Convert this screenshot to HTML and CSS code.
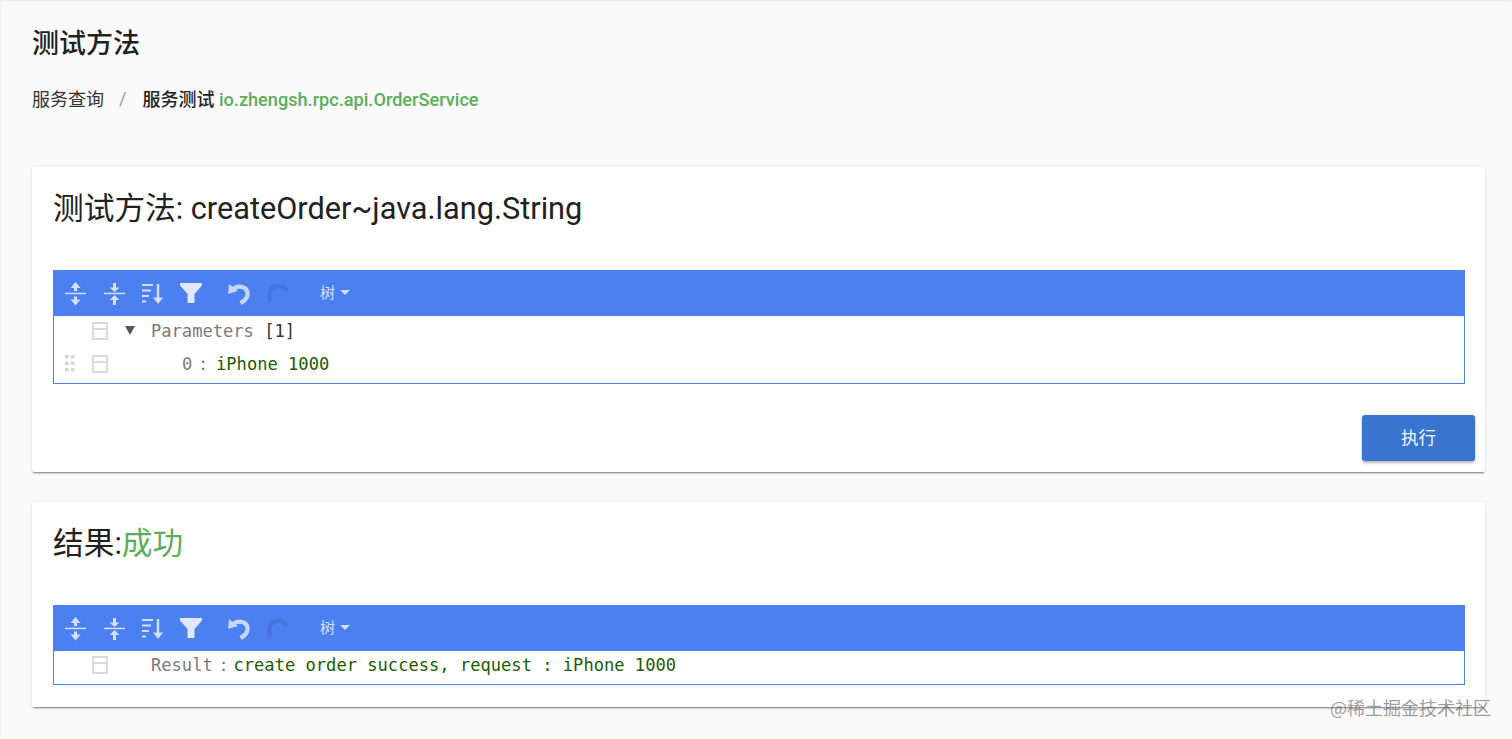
FILE: index.html
```html
<!DOCTYPE html>
<html lang="zh">
<head>
<meta charset="utf-8">
<title>测试方法</title>
<link rel="stylesheet" href="styles.css">
</head>
<body>
<svg class="defs" width="0" height="0" aria-hidden="true">
  <defs>
    <symbol id="i-expand" viewBox="0 0 21 24">
      <path d="M0 10.700h21v1.500H0z" fill="#d3e0fb"/>
      <path d="M10.500 0L15.500 6H12v3H9V6H5.500zM10.500 23.500L15.500 17.500H12v-3H9v3H5.500z" fill="#d3e0fb"/>
    </symbol>
    <symbol id="i-collapse" viewBox="0 0 21 24">
      <path d="M0 10.700h21v1.500H0z" fill="#d3e0fb"/>
      <path d="M9 1h3v4.500h3.500l-5 4.500-5-4.500H9zM10.500 13l5 5H12v5H9v-5H5.500z" fill="#d3e0fb"/>
    </symbol>
    <symbol id="i-sort" viewBox="0 0 22 24">
      <path d="M0 2h11v2H0zM0 7.500h9v2H0zM0 13h7v2H0zM0 18.500h4v2H0z" fill="#d3e0fb"/>
      <path d="M14.800 2h2.400v13.500H21l-5 6.500-5-6.500h3.800z" fill="#d3e0fb"/>
    </symbol>
    <symbol id="i-filter" viewBox="0 0 22 24">
      <path d="M0 1h22v2.500L14.500 12v9h-7v-9L0 3.500z" fill="#dfe8fc"/>
    </symbol>
    <symbol id="i-undo" viewBox="0 0 22 24">
      <path d="M0 12L1 2l9 7z" fill="#c4d6f9"/>
      <path d="M5 7.500C9 3 19.500 3.500 19.500 12c0 4-3 7-7 9" fill="none" stroke="#c4d6f9" stroke-width="4.300"/>
    </symbol>
    <symbol id="i-redo" viewBox="0 0 23 24">
      <path d="M4 19C0 13 3 4 11 4c4 0 7 2 9 5" fill="none" stroke="#4673de" stroke-width="4"/>
    </symbol>
    <symbol id="i-grip" viewBox="0 0 11 18">
      <path d="M1 0h3.500v3.500H1zM7 0h3.500v3.500H7zM1 6.500h3.500V10H1zM7 6.500h3.500V10H7zM1 13h3.500v3.500H1zM7 13h3.500v3.500H7z" fill="#d6d6d6"/>
    </symbol>
  </defs>
</svg>

<main class="page">
  <h1 class="page-title">测试方法</h1>
  <nav class="crumbs">
    <span class="crumb">服务查询</span>
    <span class="crumb-sep">/</span>
    <strong class="crumb-current">服务测试 <span class="service">io.zhengsh.rpc.api.OrderService</span></strong>
  </nav>

  <section class="card card-method">
    <h2 class="card-title">测试方法: createOrder~java.lang.String</h2>
    <div class="editor">
      <div class="toolbar">
        <svg class="tool tool-expand"><use href="#i-expand"/></svg>
        <svg class="tool tool-collapse"><use href="#i-collapse"/></svg>
        <svg class="tool tool-sort"><use href="#i-sort"/></svg>
        <svg class="tool tool-filter"><use href="#i-filter"/></svg>
        <svg class="tool tool-undo"><use href="#i-undo"/></svg>
        <svg class="tool tool-redo"><use href="#i-redo"/></svg>
        <span class="mode">树<i class="caret"></i></span>
      </div>
      <div class="tree">
        <div class="row">
          <span class="grip"></span>
          <span class="menu-box"></span>
          <span class="toggle"></span>
          <span class="key">Parameters</span>
          <span class="count">[1]</span>
        </div>
        <div class="row">
          <svg class="grip"><use href="#i-grip"/></svg>
          <span class="menu-box"></span>
          <span class="index">0</span>
          <span class="colon">:</span>
          <span class="value">iPhone 1000</span>
        </div>
      </div>
    </div>
    <div class="actions"><button class="run" type="button"><span class="run-label">执行</span></button></div>
  </section>

  <section class="card card-result">
    <h2 class="card-title">结果:<span class="ok">成功</span></h2>
    <div class="editor">
      <div class="toolbar">
        <svg class="tool tool-expand"><use href="#i-expand"/></svg>
        <svg class="tool tool-collapse"><use href="#i-collapse"/></svg>
        <svg class="tool tool-sort"><use href="#i-sort"/></svg>
        <svg class="tool tool-filter"><use href="#i-filter"/></svg>
        <svg class="tool tool-undo"><use href="#i-undo"/></svg>
        <svg class="tool tool-redo"><use href="#i-redo"/></svg>
        <span class="mode">树<i class="caret"></i></span>
      </div>
      <div class="tree">
        <div class="row">
          <span class="grip"></span>
          <span class="menu-box"></span>
          <span class="toggle-gap"></span>
          <span class="key">Result</span>
          <span class="colon">:</span>
          <span class="value">create order success, request : iPhone 1000</span>
        </div>
      </div>
    </div>
  </section>
</main>
<div class="watermark">@稀土掘金技术社区</div>
</body>
</html>
```
FILE: styles.css
```css
* { box-sizing: border-box; }
html, body { margin: 0; height: 739px; overflow: hidden; }
body {
  position: relative;
  background: #fafafa;
  color: #212121;
  font-family: Roboto, "Noto Sans CJK SC", sans-serif;
  box-shadow: inset 0 2px 2px -1px #e6e6e6, inset 2px 0 2px -1px #efefef;
}
.defs { position: absolute; }
.page { padding: 0 27px 0 32px; }
.page-title {
  margin: 0;
  padding-top: 27px;
  font-size: 27px;
  line-height: 34px;
  font-weight: 500;
  color: #212121;
}
.crumbs {
  display: flex;
  align-items: center;
  margin-top: 21px;
  height: 32px;
  font-size: 18px;
}
.crumb { color: #333; }
.crumb-sep { margin: 0 16px 0 15px; color: #999; }
.crumb-current { font-weight: 500; color: #212121; }
.service { color: #5cad5c; font-size: 18.150px; }
.card {
  background: #fff;
  border-radius: 2px;
  box-shadow: 0 2px 2px -1px rgba(0,0,0,.5), 0 0 4px rgba(0,0,0,.07);
}
.card-method { margin-top: 53px; height: 305px; padding: 0 10px 0 21px; }
.card-result { margin-top: 30px; height: 205px; padding: 0 20px 0 21px; }
.card-title {
  margin: 0;
  padding-top: 23px;
  height: 103px;
  font-size: 30.700px;
  line-height: 38px;
  font-weight: 400;
  color: #212121;
}
.ok { color: #5cad5c; }
.editor { border: 1px solid #4c7ff0; width: 1412px; }
.toolbar {
  display: flex;
  align-items: center;
  height: 45px;
  background: #4c7ff0;
  padding-left: 11px;
}
.tool { display: block; flex: none; height: 24px; }
.tool-expand { width: 21px; }
.tool-collapse { margin-left: 18px; width: 21px; }
.tool-sort { margin-left: 17px; width: 22px; }
.tool-filter { margin-left: 16px; width: 22px; }
.tool-undo { margin-left: 26px; width: 22px; }
.tool-redo { margin-left: 17px; width: 23px; }
.mode {
  display: flex;
  align-items: center;
  margin-left: 30px;
  color: #d3e0fb;
  font-size: 15px;
  line-height: 20px;
  margin-top: -2px;
}
.caret {
  margin-left: 5px;
  border-left: 5px solid transparent;
  border-right: 5px solid transparent;
  border-top: 5px solid #d3e0fb;
}
.tree {
  min-height: 33px;
  font-family: "DejaVu Sans Mono", "Liberation Mono", monospace;
  font-size: 17.100px;
}
.card-method .tree { min-height: 67px; }
.row {
  display: flex;
  align-items: center;
  height: 33px;
  padding-bottom: 4px;
  white-space: pre;
}
.card-result .row { padding-bottom: 5px; }
.grip { display: block; flex: none; width: 11px; height: 18px; margin-left: 10px; }
.menu-box {
  flex: none;
  width: 16px;
  height: 18px;
  margin-left: 17px;
  border: 2px solid #dadada;
  background: linear-gradient(#dadada, #dadada) 0 4px / 100% 2px no-repeat;
}
.toggle {
  flex: none;
  width: 0;
  height: 0;
  margin-left: 17px;
  border-left: 5.500px solid transparent;
  border-right: 5.500px solid transparent;
  border-top: 9px solid #555;
}
.toggle-gap { flex: none; width: 43px; }
.key { color: #7a7a7a; margin-left: 16px; }
.toggle-gap + .key { margin-left: 0; }
.count { color: #333; margin-left: 10.260px; }
.index { color: #808080; margin-left: 74px; }
.colon {
  color: #666;
  margin: 0 7px 0 8px;
  font-family: "DejaVu Sans", sans-serif;
  font-size: 17px;
}
.index + .colon { margin-right: 10px; }
.value { color: #1a5c00; }
.actions { display: flex; justify-content: flex-end; margin-top: 31px; }
.run {
  width: 113px;
  height: 46px;
  border: 0;
  padding: 0 0 3px;
  border-radius: 3px;
  background: #3874d0;
  color: #f2f6fc;
  font-family: Roboto, "Noto Sans CJK SC", sans-serif;
  font-size: 17.500px;
  box-shadow: 0 2px 3px rgba(0,0,0,.3);
}
.watermark {
  position: absolute;
  left: 1330px;
  top: 696px;
  color: rgba(90,90,90,.6);
  font-family: "Noto Sans CJK SC", sans-serif;
  font-size: 18px;
  line-height: 22px;
  white-space: nowrap;
}
```
